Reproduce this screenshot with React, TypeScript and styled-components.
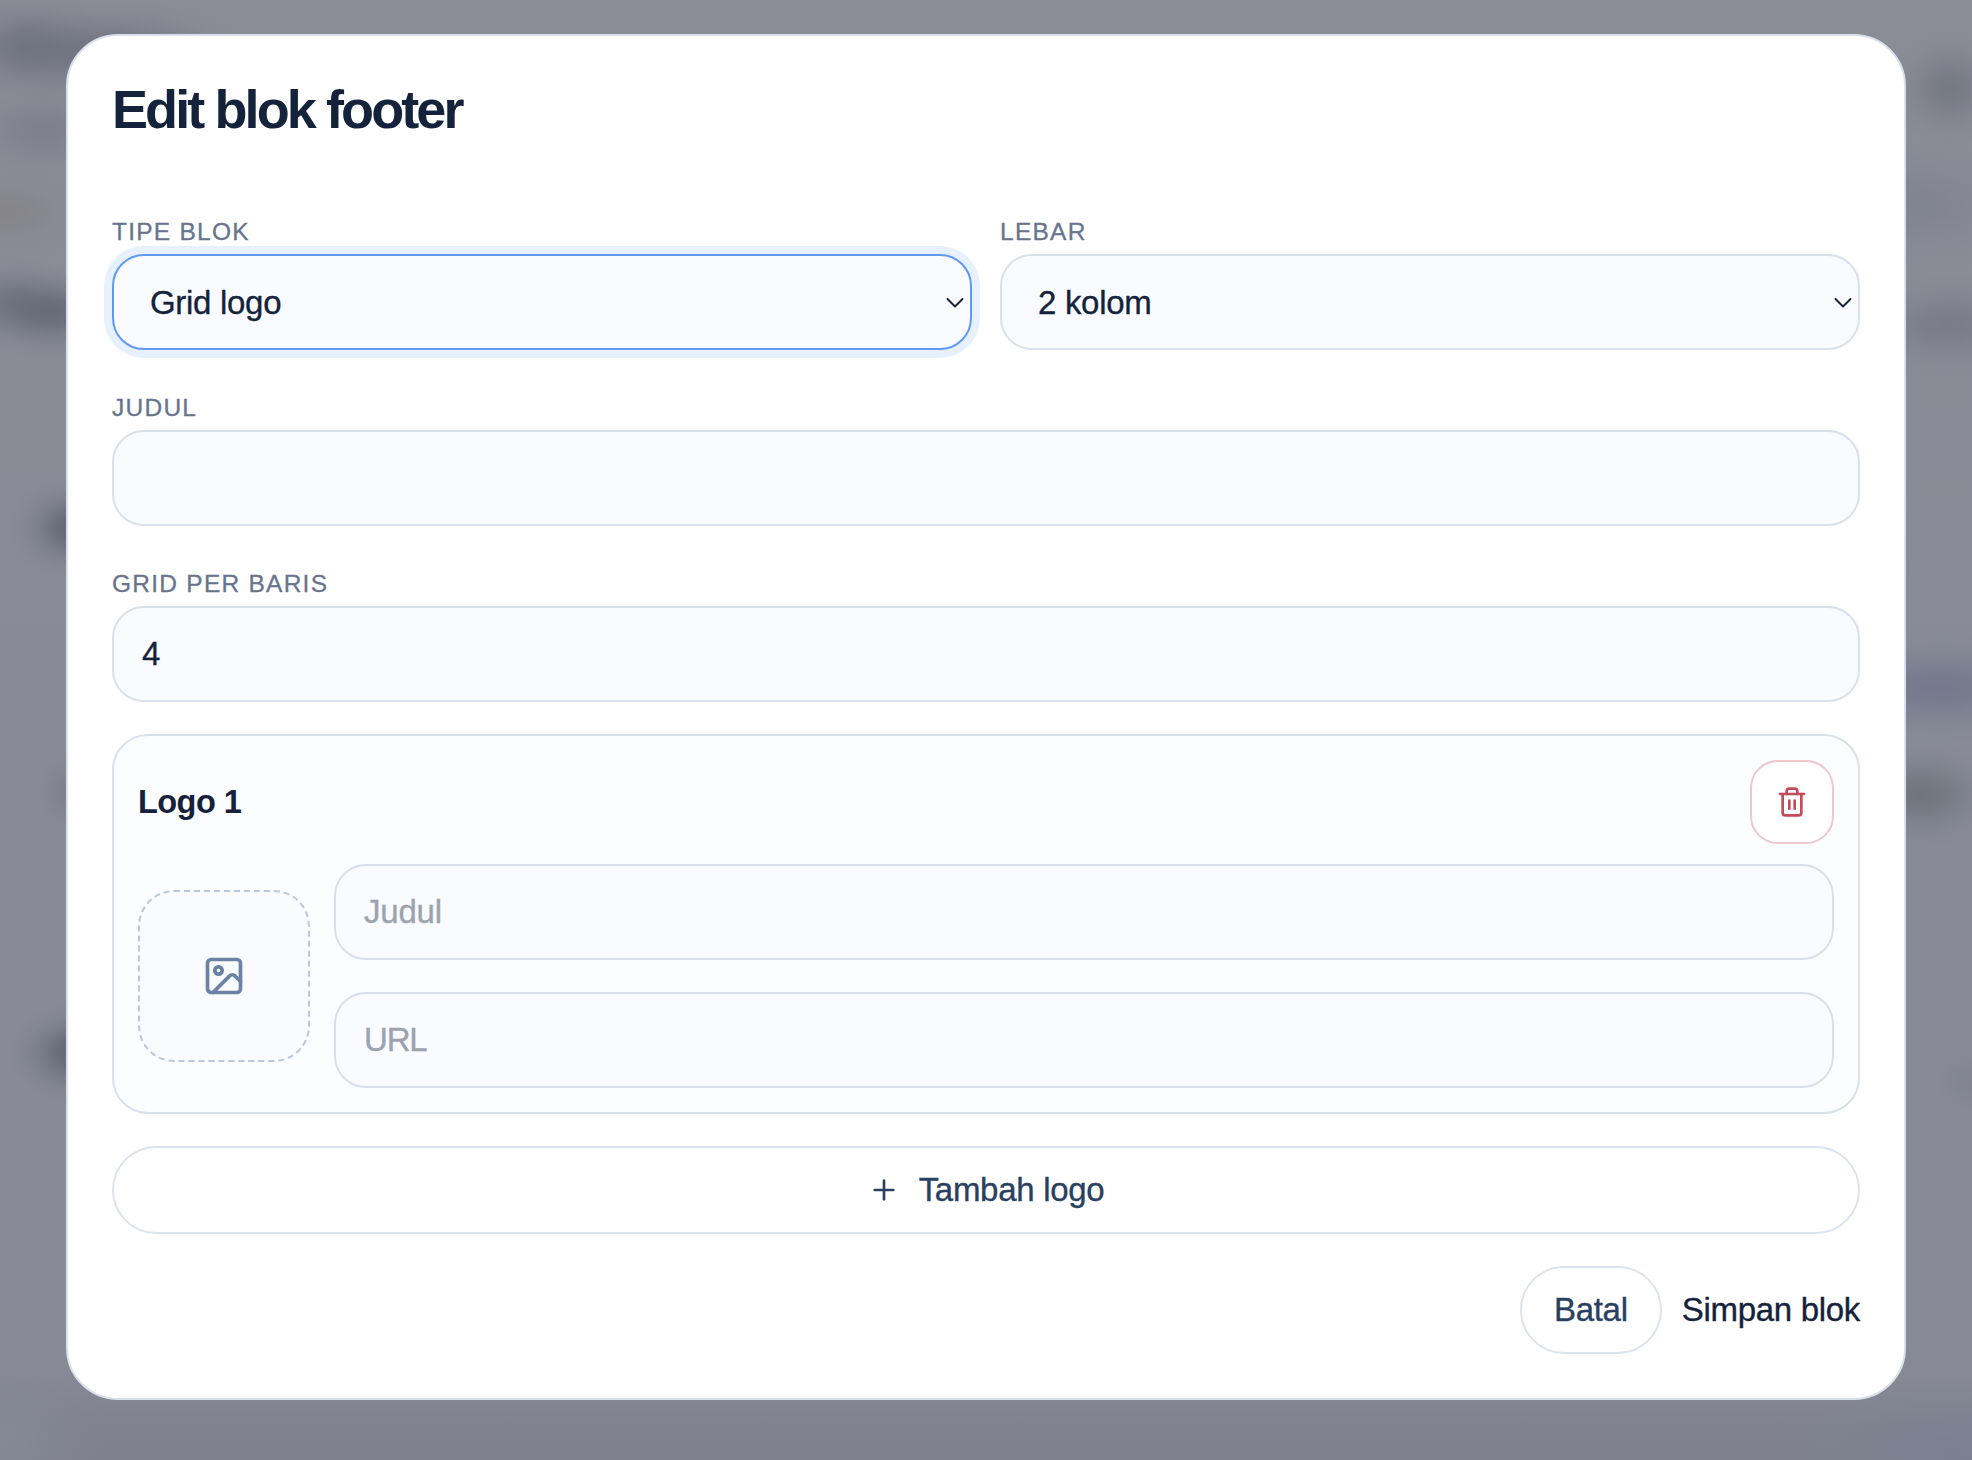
import React from 'react';
import styled, { createGlobalStyle } from 'styled-components';
import { Image, Plus, Trash2 } from 'lucide-react';

const GlobalStyle = createGlobalStyle`
  *, *::before, *::after { box-sizing: border-box; }
  html, body { margin: 0; padding: 0; }
  body {
    font-family: "Liberation Sans", Arial, sans-serif;
    color: #14233b;
    overflow: hidden;
  }
  button, input { font: inherit; color: inherit; }
`;

/* Soft spot with a gaussian-like falloff, used for the dimmed page behind the dialog. */
const blob = (x: number, y: number, rx: number, ry: number, rgb: string, a: number) =>
  `radial-gradient(ellipse ${rx}px ${ry}px at ${x}px ${y}px, rgba(${rgb}, ${a}) 0%, rgba(${rgb}, ${a * 0.8}) 25%, rgba(${rgb}, ${a * 0.38}) 50%, rgba(${rgb}, ${a * 0.1}) 75%, rgba(${rgb}, 0) 100%)`;

const Backdrop = styled.div`
  height: 1460px;
  padding: 34px 66px 60px;
  background:
    ${blob(25, 46, 80, 56, '98, 102, 116', 0.5)},
    ${blob(100, 52, 160, 56, '98, 102, 116', 0.6)},
    ${blob(45, 130, 100, 52, '112, 116, 128', 0.45)},
    ${blob(5, 212, 100, 46, '130, 128, 124', 0.5)},
    ${blob(10, 302, 66, 48, '86, 92, 106', 0.4)},
    ${blob(55, 312, 90, 50, '86, 92, 106', 0.65)},
    ${blob(74, 528, 66, 52, '82, 88, 102', 0.7)},
    ${blob(66, 792, 36, 46, '112, 116, 128', 0.4)},
    ${blob(74, 1053, 66, 52, '82, 88, 102', 0.7)},
    ${blob(1950, 88, 66, 60, '102, 107, 116', 0.55)},
    ${blob(1906, 205, 160, 70, '116, 121, 136', 0.4)},
    ${blob(1950, 325, 120, 54, '106, 110, 122', 0.5)},
    ${blob(1940, 688, 180, 58, '98, 110, 134', 0.6)},
    ${blob(1920, 795, 90, 56, '96, 102, 110', 0.6)},
    ${blob(1972, 1082, 50, 40, '116, 120, 132', 0.3)},
    ${blob(1972, 1450, 180, 70, '116, 128, 148', 0.6)},
    ${blob(0, 1440, 110, 80, '138, 142, 150', 0.6)},
    linear-gradient(#8a8c96 0, #878a95 1370px, #80838f 1425px, #7f828e 1460px);
`;

const Dialog = styled.section`
  display: flex;
  flex-direction: column;
  gap: 32px;
  height: 1366px;
  padding: 44px;
  border: 2px solid #d9dfeb;
  border-radius: 52px;
  background: #fff;
`;

const Title = styled.h2`
  height: 94px;
  margin: 0;
  font-size: 54px;
  font-weight: 700;
  line-height: 58px;
  letter-spacing: -2.9px;
`;

const FieldRow = styled.div`
  display: grid;
  grid-template-columns: 1fr 1fr;
  gap: 28px;
`;

const Field = styled.label`
  display: flex;
  flex-direction: column;
`;

const FieldLabel = styled.span`
  height: 48px;
  padding-top: 8px;
  font-size: 24.5px;
  line-height: 36px;
  letter-spacing: 1.25px;
  text-transform: uppercase;
  color: #67748c;
  -webkit-text-stroke: 0.3px;
`;

const bodyText = `
  font-size: 33px;
  letter-spacing: -0.3px;
  -webkit-text-stroke: 0.35px;
`;

const control = `
  width: 100%;
  height: 96px;
  border-radius: 32px;
  background: #fafbff;
  ${bodyText}
`;

const SelectBox = styled.div<{ $focused?: boolean }>`
  ${control}
  display: flex;
  align-items: center;
  justify-content: space-between;
  padding: 1px 5px 0 36px;
  border: 2px solid ${(p) => (p.$focused ? '#6099f5' : '#dbdfeb')};
  box-shadow: ${(p) => (p.$focused ? '0 0 0 8px #e7f1fe' : 'none')};
`;

const Chevron = styled.svg`
  width: 20px;
  height: 12px;
  fill: none;
  stroke: #14233b;
  stroke-width: 1.9;
  stroke-linecap: round;
  stroke-linejoin: round;
`;

const TextInput = styled.input<{ $tracking?: string }>`
  ${control}
  display: block;
  padding: 0 28px;
  border: 2px solid #dbdfeb;
  outline: none;
  letter-spacing: ${(p) => p.$tracking ?? '-0.2px'};

  &::placeholder {
    color: #9ca3af;
    opacity: 1;
  }
`;

const LogoCard = styled.div`
  display: flex;
  flex-direction: column;
  gap: 20px;
  padding: 24px;
  border: 2px solid #d9dfeb;
  border-radius: 36px;
  background: #fcfdff;
`;

const CardHeader = styled.div`
  display: flex;
  align-items: center;
  justify-content: space-between;
`;

const CardTitle = styled.strong`
  padding-top: 1px;
  font-size: 32.5px;
  font-weight: 700;
  letter-spacing: -0.55px;
`;

const DeleteButton = styled.button`
  display: grid;
  place-items: center;
  width: 84px;
  height: 84px;
  padding: 0;
  border: 2px solid #edc8ce;
  border-radius: 28px;
  background: #fff;
  color: #c24a59;
`;

const CardBody = styled.div`
  display: grid;
  grid-template-columns: 172px 1fr;
  align-items: center;
  gap: 24px;
`;

const ImagePicker = styled.button`
  display: grid;
  place-items: center;
  width: 172px;
  height: 172px;
  padding: 0;
  border: 2px dashed #bcc6da;
  border-radius: 36px;
  background: #fafbff;
  color: #6a82a3;
`;

const InputStack = styled.div`
  display: grid;
  gap: 32px;
`;

const PillButton = styled.button`
  display: flex;
  align-items: center;
  justify-content: center;
  gap: 19px;
  height: 88px;
  flex: none;
  padding: 0 32px;
  border: 2px solid #dce3ee;
  border-radius: 44px;
  background: #fff;
  color: #294060;
  ${bodyText}
`;

const Actions = styled.div`
  display: flex;
  justify-content: flex-end;
  align-items: center;
  gap: 20px;
`;

const PlainButton = styled.button`
  padding: 0;
  border: 0;
  background: none;
  ${bodyText}
`;

function Select({ value, focused }: { value: string; focused?: boolean }) {
  return (
    <SelectBox $focused={focused} tabIndex={0} role="combobox">
      <span>{value}</span>
      <Chevron viewBox="0 0 20 12">
        <path d="M2.5 2 10 9.5 17.5 2" />
      </Chevron>
    </SelectBox>
  );
}

export default function App() {
  return (
    <>
      <GlobalStyle />
      <Backdrop>
        <Dialog role="dialog">
          <Title>Edit blok footer</Title>
          <FieldRow>
            <Field>
              <FieldLabel>Tipe blok</FieldLabel>
              <Select value="Grid logo" focused />
            </Field>
            <Field>
              <FieldLabel>Lebar</FieldLabel>
              <Select value="2 kolom" />
            </Field>
          </FieldRow>
          <Field>
            <FieldLabel>Judul</FieldLabel>
            <TextInput />
          </Field>
          <Field>
            <FieldLabel>Grid per baris</FieldLabel>
            <TextInput defaultValue="4" />
          </Field>
          <LogoCard>
            <CardHeader>
              <CardTitle>Logo 1</CardTitle>
              <DeleteButton aria-label="Hapus">
                <Trash2 size={32} />
              </DeleteButton>
            </CardHeader>
            <CardBody>
              <ImagePicker aria-label="Gambar">
                <Image size={44} />
              </ImagePicker>
              <InputStack>
                <TextInput placeholder="Judul" />
                <TextInput placeholder="URL" $tracking="-1.2px" />
              </InputStack>
            </CardBody>
          </LogoCard>
          <PillButton>
            <Plus size={32} />
            <span>Tambah logo</span>
          </PillButton>
          <Actions>
            <PillButton>Batal</PillButton>
            <PlainButton>Simpan blok</PlainButton>
          </Actions>
        </Dialog>
      </Backdrop>
    </>
  );
}
